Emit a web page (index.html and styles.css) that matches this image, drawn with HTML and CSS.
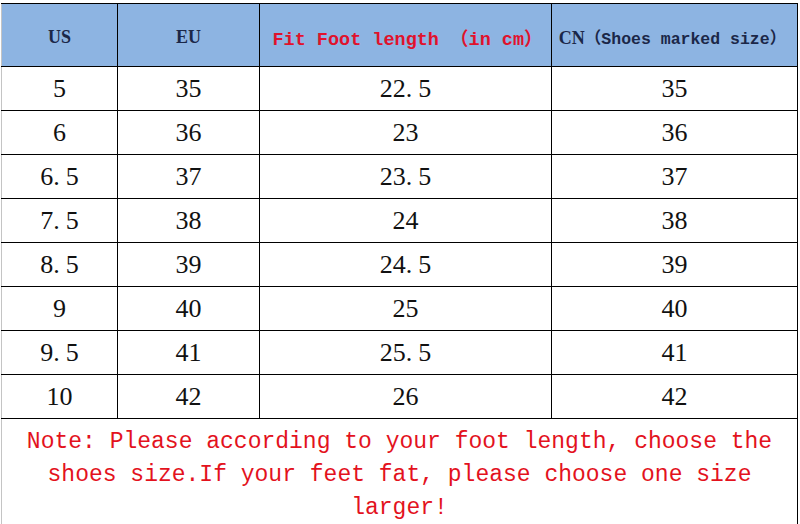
FILE: index.html
```html
<!DOCTYPE html>
<html lang="en">
<head>
<meta charset="utf-8">
<title>Size chart</title>
<link rel="stylesheet" href="styles.css">
</head>
<body>
<div class="page">
  <table class="chart">
    <colgroup>
      <col class="c-us">
      <col class="c-eu">
      <col class="c-len">
      <col class="c-cn">
    </colgroup>
    <thead>
      <tr class="head">
        <th class="h-std">US</th>
        <th class="h-std">EU</th>
        <th class="h-red">Fit Foot length （in cm）</th>
        <th class="h-cn"><span class="cn">CN</span><span class="cn-sub">（Shoes marked size）</span></th>
      </tr>
    </thead>
    <tbody>
      <tr><td>5</td><td>35</td><td>22<span class="dp">.</span>5</td><td>35</td></tr>
      <tr><td>6</td><td>36</td><td>23</td><td>36</td></tr>
      <tr><td>6<span class="dp">.</span>5</td><td>37</td><td>23<span class="dp">.</span>5</td><td>37</td></tr>
      <tr><td>7<span class="dp">.</span>5</td><td>38</td><td>24</td><td>38</td></tr>
      <tr><td>8<span class="dp">.</span>5</td><td>39</td><td>24<span class="dp">.</span>5</td><td>39</td></tr>
      <tr><td>9</td><td>40</td><td>25</td><td>40</td></tr>
      <tr><td>9<span class="dp">.</span>5</td><td>41</td><td>25<span class="dp">.</span>5</td><td>41</td></tr>
      <tr><td>10</td><td>42</td><td>26</td><td>42</td></tr>
      <tr class="note-row"><td class="note" colspan="4">Note: Please according to your foot length, choose the shoes size.If your feet fat, please choose one size larger!</td></tr>
    </tbody>
  </table>
</div>
</body>
</html>
```

FILE: styles.css
```css
html, body {
  margin: 0;
  padding: 0;
  background: #ffffff;
}

.page {
  padding: 3px 0 0 1px;
  width: 796px;
}

.chart {
  border-collapse: collapse;
  table-layout: fixed;
  width: 796px;
  border-top: 1px solid #000;
  border-right: 1px solid #000;
  border-bottom: 1px solid #000;
  border-left: 1px solid #c4c4c4;
}

.c-us { width: 116px; }
.c-eu { width: 142px; }
.c-len { width: 292px; }
.c-cn { width: 246px; }

.chart th,
.chart td {
  border: 1px solid #000;
  padding: 0;
  text-align: center;
  vertical-align: middle;
}

.chart th:first-child,
.chart td:first-child {
  border-left-color: #c4c4c4;
}

.head th {
  height: 58px;
  padding-top: 4px;
  background: #8db4e2;
  white-space: nowrap;
}

.h-std,
.cn {
  font-family: "Liberation Serif", serif;
  font-weight: bold;
  font-size: 18px;
  color: #1b2748;
}

.h-red {
  font-family: "Liberation Mono", "Noto Sans CJK SC", monospace;
  font-weight: bold;
  font-size: 18.5px;
  color: #e0122c;
}

.head th.h-red {
  padding-left: 4px;
}

.head th.h-cn {
  padding-right: 4px;
}

.cn-sub {
  font-family: "Liberation Mono", "Noto Sans CJK SC", monospace;
  font-weight: bold;
  font-size: 16.5px;
  color: #1b2748;
}

tbody td {
  height: 43px;
  font-family: "Liberation Serif", serif;
  font-size: 26px;
  color: #111111;
}

.dp {
  margin-right: 6px;
}

.note-row td.note {
  height: 96px;
  padding: 7px 6px 0;
  font-family: "Liberation Mono", monospace;
  font-size: 23px;
  line-height: 33px;
  color: #e3121d;
  text-align: center;
}
```
